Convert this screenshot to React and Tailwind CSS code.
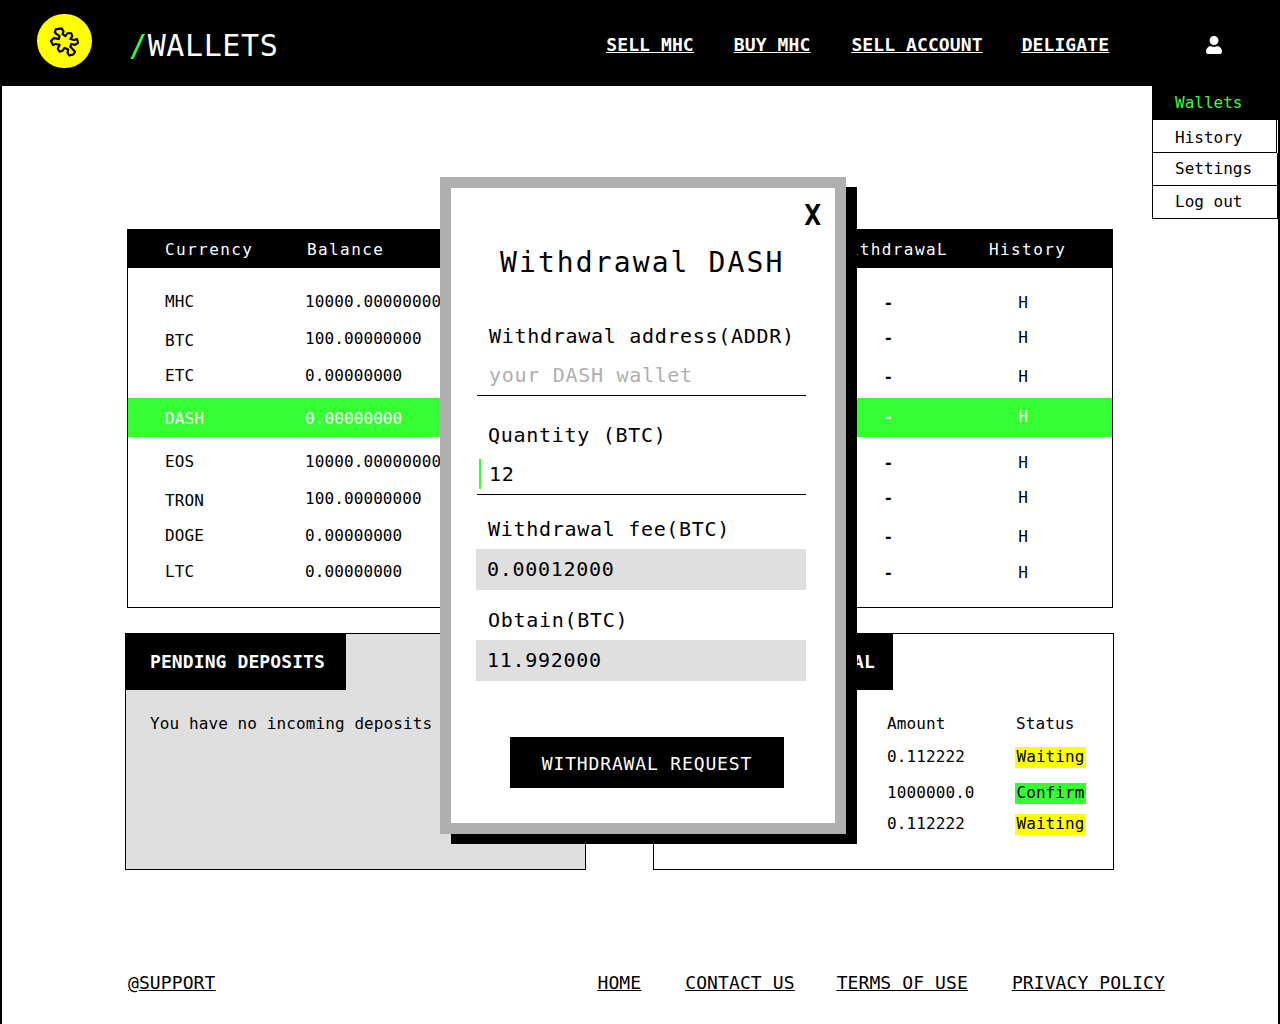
import React from 'react';
import { FaUser } from 'react-icons/fa';

const rows = [
    { name: 'MHC', balance: '10000.00000000', nameClass: '', balanceClass: '', endClass: 'mt-[3px]', rowClass: 'h-[37px]' },
    { name: 'BTC', balance: '100.00000000', nameClass: 'mt-[5px]', balanceClass: '', endClass: 'mt-[-2px]', rowClass: 'h-[37px]' },
    { name: 'ETC', balance: '0.00000000', nameClass: '', balanceClass: '', endClass: 'mt-[3px]', rowClass: 'h-[37px]' },
    { name: 'DASH', balance: '0.00000000', nameClass: 'mt-[2px]', balanceClass: 'mt-[2px]', endClass: 'mt-[-1px]', rowClass: 'h-[39px] mt-[4px] mb-[5px] ml-[-37px] pl-[37px] bg-[#33ff33] text-white' },
    { name: 'EOS', balance: '10000.00000000', nameClass: 'mt-[2px]', balanceClass: 'mt-[2px]', endClass: 'mt-[3px]', rowClass: 'h-[38px]' },
    { name: 'TRON', balance: '100.00000000', nameClass: 'mt-[5px]', balanceClass: '', endClass: 'mt-[-2px]', rowClass: 'h-[37px]' },
    { name: 'DOGE', balance: '0.00000000', nameClass: '', balanceClass: '', endClass: 'mt-[3px]', rowClass: 'h-[37px]' },
    { name: 'LTC', balance: '0.00000000', nameClass: '', balanceClass: '', endClass: 'mt-[1px]', rowClass: 'h-[36px]' },
];

const withdrawals = [
    { amount: '0.112222', status: 'Waiting', color: 'bg-[#ffff00]', rowClass: 'h-[36px]' },
    { amount: '1000000.0', status: 'Confirm', color: 'bg-[#33ff33]', rowClass: 'h-[36px]' },
    { amount: '0.112222', status: 'Waiting', color: 'bg-[#ffff00]', rowClass: 'h-[26px]' },
];

const Logo = () => (
    <div className="w-[55px] h-[54px] rounded-full bg-[#ffff00] flex items-center justify-center">
        <svg width="31" height="33" viewBox="-2 -2 32 33" fill="none" stroke="#000" strokeWidth="2.2" strokeLinejoin="round">
            <path d="M5 2 L11 1 L13 4 L12 7 L15 9 L17 6 L21 6 L22 9 L20 12 L24 13 L27 12 L28 16 L25 18 L21 17 L20 20 L23 23 L25 25 L23 28 L19 29 L17 26 L18 23 L14 21 L12 24 L9 25 L7 22 L9 18 L5 17 L2 18 L0 14 L3 11 L8 12 L9 9 L6 7 L4 5 Z" />
        </svg>
    </div>
);

const Field = ({ children, className }) => (
    <div className={`text-[20px] leading-[24px] tracking-[0.7px] ${className}`}>{children}</div>
);

const App = () => {
    return (
        <div className="relative h-[1024px] overflow-hidden border-x-2 border-black bg-white text-black font-['DejaVu_Sans_Mono',monospace]">
            {/* Top bar */}
            <header className="h-[86px] mx-[-2px] bg-black text-white flex items-center">
                <div className="ml-[37px] mt-[-4px]">
                    <Logo />
                </div>
                <div className="ml-[37px] mt-[6px] text-[30px] leading-none tracking-[0.6px]">
                    <span className="text-[#33ff33]">/</span>WALLETS
                </div>
                <nav className="ml-[328px] mt-[2px] flex text-[18px] tracking-[0.1px] font-bold underline">
                    <a>SELL MHC</a>
                    <a className="ml-[40px]">BUY MHC</a>
                    <a className="ml-[41px]">SELL ACCOUNT</a>
                    <a className="ml-[39px]">DELIGATE</a>
                </nav>
                <FaUser className="ml-[96px] mt-[4px] text-[18px]" />
            </header>

            {/* Account menu */}
            <div className="absolute left-[1150px] top-[86px] w-[126px] text-[16px]">
                <div className="h-[34px] bg-black text-[#33ff33] pl-[23px] flex items-center">Wallets</div>
                <div className="h-[33px] pt-[3px] border border-t-0 border-black mr-[1px] pl-[22px] flex items-center">History</div>
                <div className="h-[33px] border border-t-0 border-black pl-[22px] flex items-center">Settings</div>
                <div className="h-[33px] border border-t-0 border-black pl-[22px] flex items-center">Log out</div>
            </div>

            <main className="ml-[123px] w-[989px] pt-[143px]">
                {/* Currencies */}
                <section className="ml-[2px] mr-[1px] border border-black">
                    <div className="h-[39px] pt-[2px] mt-[-1px] bg-black text-white text-[16px] tracking-[1.4px] flex items-center">
                        <span className="ml-[37px] w-[142px]">Currency</span>
                        <span>Balance</span>
                        <span className="ml-auto mr-[164px]">WithdrawaL</span>
                        <span className="absolute left-[987px]">History</span>
                    </div>
                    <div className="pt-[15px] pb-[17px] pl-[37px] text-[16px] tracking-[0.1px]">
                        {rows.map((row) => (
                            <div key={row.name} className={`flex items-center ${row.rowClass}`}>
                                <span className={`w-[140px] ${row.nameClass}`}>{row.name}</span>
                                <span className={row.balanceClass}>{row.balance}</span>
                                <span className={`ml-auto font-bold ${row.endClass}`}>-</span>
                                <span className={`ml-[125px] mr-[84px] ${row.endClass}`}>H</span>
                            </div>
                        ))}
                    </div>
                </section>

                <div className="mt-[25px] flex justify-between text-[16px] tracking-[0.1px] h-[237px]">
                    {/* Pending deposits */}
                    <section className="w-[461px] border border-black bg-[#dfdfdf]">
                        <h2 className="w-[220px] h-[56px] pl-[24px] pb-[2px] bg-black text-white text-[18px] font-bold flex items-center">PENDING DEPOSITS</h2>
                        <p className="mt-[22px] ml-[24px]">You have no incoming deposits</p>
                    </section>

                    {/* Pending withdrawal */}
                    <section className="w-[461px] border border-black">
                        <h2 className="w-[239px] h-[56px] pl-[24px] pb-[2px] bg-black text-white text-[18px] font-bold flex items-center">PENDING WITHDRAWAL</h2>
                        <div className="pl-[233px] pt-[22px]">
                            <div className="flex mb-[3px]">
                                <span className="w-[129px]">Amount</span>
                                <span>Status</span>
                            </div>
                            {withdrawals.map((item, index) => (
                                <div key={index} className={`flex items-center ${item.rowClass}`}>
                                    <span className="w-[128px]">{item.amount}</span>
                                    <span className={`w-[71px] h-[21px] flex items-center justify-center ${item.color}`}>{item.status}</span>
                                </div>
                            ))}
                        </div>
                    </section>
                </div>
            </main>

            <footer className="mt-[99px] ml-[126px] w-[1037px] flex text-[18px] tracking-[0.1px] underline">
                <a className="mr-auto">@SUPPORT</a>
                <a className="mr-[44px]">HOME</a>
                <a className="mr-[42px]">CONTACT US</a>
                <a className="mr-[44px]">TERMS OF USE</a>
                <a>PRIVACY POLICY</a>
            </footer>

            {/* Withdrawal modal */}
            <div className="absolute left-[438px] top-[177px] w-[406px] h-[657px] border-[11px] border-[#afafaf] bg-white shadow-[11px_10px_0_#000]">
                <div className="absolute right-[14px] top-[11px] text-[28px] leading-[34px] font-bold">X</div>
                <h1 className="mt-[55px] ml-[49px] text-[28px] leading-[40px] tracking-[2.1px]">Withdrawal DASH</h1>
                <div className="pl-[26px] w-[355px]">
                    <Field className="mt-[41px] ml-[12px]">Withdrawal address(ADDR)</Field>
                    <Field className="mt-[15px] ml-[12px] text-[#afafaf]">your DASH wallet</Field>
                    <div className="mt-[8px] border-b border-black" />
                    <Field className="mt-[27px] ml-[11px]">Quantity (BTC)</Field>
                    <div className="mt-[12px] h-[36px] border-b border-black flex">
                        <div className="ml-[2px] w-[2px] h-[30px] bg-[#33ff33]" />
                        <Field className="ml-[8px] mt-[3px]">12</Field>
                    </div>
                    <Field className="mt-[22px] ml-[11px]">Withdrawal fee(BTC)</Field>
                    <div className="mt-[8px] ml-[-1px] h-[41px] bg-[#dfdfdf] pl-[11px] pb-[2px] flex items-center">
                        <Field>0.00012000</Field>
                    </div>
                    <Field className="mt-[18px] ml-[11px]">Obtain(BTC)</Field>
                    <div className="mt-[8px] ml-[-1px] h-[41px] bg-[#dfdfdf] pl-[11px] pb-[2px] flex items-center">
                        <Field>11.992000</Field>
                    </div>
                    <button className="mt-[56px] ml-[33px] w-[274px] h-[51px] pt-[2px] bg-black text-white text-[18px] tracking-[0.85px]">WITHDRAWAL REQUEST</button>
                </div>
            </div>
        </div>
    );
};

export default App;
